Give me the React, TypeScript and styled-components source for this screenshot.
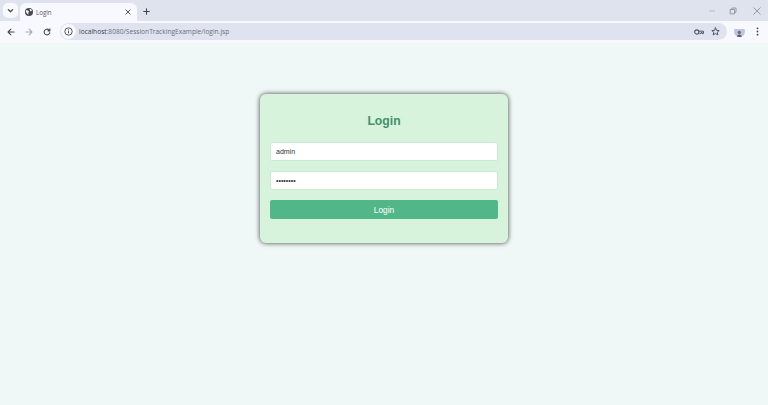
import React from "react";
import styled, { createGlobalStyle } from "styled-components";

const Global = createGlobalStyle`
  html, body { margin: 0; padding: 0; height: 100%; overflow: hidden; }
  #root { height: 100%; }
  * { box-sizing: border-box; }
`;
const Shell = styled.div`
  width: 768px; height: 405px; display: flex; flex-direction: column;
  font-family: "Liberation Sans", Arial, sans-serif; background: #eff8f6;
`;
const TabStrip = styled.div`
  height: 21px; background: #dfe3ee; display: flex; align-items: flex-end; flex: none;
`;
const TabSearch = styled.button`
  width: 15px; height: 15px; margin: 0 0 3px 3px; border: 0; padding: 0; border-radius: 5px;
  background: #f8f9fd; display: flex; align-items: center; justify-content: center;
`;
const Tab = styled.div`
  width: 117px; height: 18px; margin-left: 2px; background: #f8f9fe; border-radius: 6px 6px 0 0;
  display: flex; align-items: center; padding: 0 4px 0 4px; color: #55585e;
`;
const TabTitle = styled.span`
  margin-left: 3px; flex: 1; font-family: "Open Sans", sans-serif; font-size: 6.2px;
`;
const IconSlot = styled.span<{ $w?: number }>`
  display: flex; align-items: center; justify-content: center; flex: none; width: ${(p) => p.$w ?? 12}px;
`;
const NewTab = styled.span`
  margin: 0 0 3px 2px; width: 14px; height: 14px; display: flex; align-items: center; justify-content: center;
`;
const WindowControls = styled.div`
  margin-left: auto; align-self: flex-start; display: flex; height: 21px; align-items: center; padding-right: 6px; gap: 11px;
`;
const CloseGlyph = styled.svg`
  margin-left: 3px;
`;
const Toolbar = styled.div`
  height: 22px; background: #f8f9fe; display: flex; align-items: center; flex: none; padding: 0 0 1px 5px;
`;
const NavGroup = styled.div`
  display: flex; align-items: center; gap: 6px; width: 55px;
`;
const Omnibox = styled.div`
  width: 667px; height: 17px; border-radius: 9px; background: #dfe3f0; display: flex; align-items: center;
  padding: 0 4px 0 1px;
`;
const InfoChip = styled.span`
  width: 15px; height: 15px; border-radius: 50%; background: #f8f9fe; display: flex; align-items: center; justify-content: center; flex: none;
`;
const Url = styled.span`
  margin-left: 3px; flex: 1; font-family: "Open Sans", sans-serif; font-size: 6.6px; color: #6a6d75; white-space: nowrap;
  b { font-weight: 400; color: #3a3d42; }
`;
const OmniIcons = styled.div`
  display: flex; align-items: center; gap: 7px; padding-right: 3px;
`;
const ToolbarEnd = styled.div`
  display: flex; align-items: center; margin-left: 7px; gap: 11px;
`;
const Avatar = styled.span`
  width: 11px; height: 11px; border-radius: 50%; overflow: hidden; display: block; flex: none;
`;
const Page = styled.main`
  flex: 1; display: flex; justify-content: center; align-items: flex-start; padding-top: 51px; background: #eff8f6;
`;
const Card = styled.form`
  width: 248px; height: 149px; background: #d8f3dc; border-radius: 6px; padding: 0 10px;
  box-shadow: 0 0 5px rgba(0, 0, 0, 0.75); display: flex; flex-direction: column;
`;
const Title = styled.h2`
  margin: 19px 0 13px; height: 16px; line-height: 16px; text-align: center; font-size: 12.2px; font-weight: 700; color: #40916c;
`;
const Field = styled.input`
  width: 228px; height: 19px; margin-bottom: 10px; padding: 0 5px; border: 1px solid #c8ecd2; border-radius: 2px;
  background: #fff; font-family: "Liberation Sans", Arial, sans-serif; font-size: 7px; color: #333; outline: none;
`;
const Submit = styled.button`
  width: 228px; height: 19px; border: 0; border-radius: 2px; background: #52b788; color: #fff;
  font-family: "Liberation Sans", Arial, sans-serif; font-size: 8.4px; padding: 0;
`;

const Stroke = { fill: "none", stroke: "#44474c", strokeWidth: 1.2, strokeLinecap: "round" as const, strokeLinejoin: "round" as const };

export default function App() {
  return (
    <Shell>
      <Global />
      <TabStrip>
        <TabSearch type="button" aria-label="Tab search">
          <svg width="7" height="7" viewBox="0 0 8 8"><path d="M1.5 3l2.5 2.5L6.5 3" {...Stroke} strokeWidth={1.5} /></svg>
        </TabSearch>
        <Tab>
          <IconSlot $w={9}>
            <svg width="8" height="8" viewBox="0 0 8 8">
              <circle cx="4" cy="4" r="4" fill="#45484d" />
              <path d="M1 2.2l2 .3 1 1.2-.8 1 .3 2L2 5.5 1 4zM4.5.8l2 .6.4 1.6-1.7.2z" fill="#f8f9fe" />
            </svg>
          </IconSlot>
          <TabTitle>Login</TabTitle>
          <IconSlot $w={10}>
            <svg width="6" height="6" viewBox="0 0 7 7"><path d="M1 1l5 5M6 1L1 6" {...Stroke} strokeWidth={1.1} /></svg>
          </IconSlot>
        </Tab>
        <NewTab>
          <svg width="7" height="7" viewBox="0 0 8 8"><path d="M4 .8v6.4M.8 4h6.4" {...Stroke} strokeWidth={1.2} /></svg>
        </NewTab>
        <WindowControls>
          <svg width="10" height="10" viewBox="0 0 10 10"><path d="M2 5h6" fill="none" stroke="#b4b7c0" strokeWidth="0.9" /></svg>
          <svg width="10" height="10" viewBox="0 0 10 10"><path d="M2.2 3.5h4.3v4.3H2.2zM3.8 3.4V2h4.2v4.2H6.6" fill="none" stroke="#85888f" strokeWidth="0.8" /></svg>
          <CloseGlyph width="10" height="10" viewBox="0 0 10 10"><path d="M1.5 1.5l7 7M8.5 1.5l-7 7" fill="none" stroke="#85888f" strokeWidth="0.8" /></CloseGlyph>
        </WindowControls>
      </TabStrip>
      <Toolbar>
        <NavGroup>
          <IconSlot>
            <svg width="8" height="8" viewBox="0 0 9 9"><path d="M8 4.5H1.3M4.3 1.4L1.2 4.5l3.1 3.1" {...Stroke} /></svg>
          </IconSlot>
          <IconSlot>
            <svg width="8" height="8" viewBox="0 0 9 9"><path d="M1 4.5h6.7M4.7 1.4l3.1 3.1-3.1 3.1" {...Stroke} stroke="#a8abb3" /></svg>
          </IconSlot>
          <IconSlot>
            <svg width="8" height="8" viewBox="0 0 9 9"><path d="M7.6 5.2A3.2 3.2 0 1 1 6.7 2.2L7.8 3.2M7.8 1v2.2H5.6" {...Stroke} /></svg>
          </IconSlot>
        </NavGroup>
        <Omnibox>
          <InfoChip>
            <svg width="9" height="9" viewBox="0 0 9 9">
              <circle cx="4.5" cy="4.5" r="3.7" fill="none" stroke="#44474c" strokeWidth="0.9" />
              <path d="M4.5 4v2.4" stroke="#44474c" strokeWidth="0.9" />
              <circle cx="4.5" cy="2.8" r=".6" fill="#44474c" />
            </svg>
          </InfoChip>
          <Url><b>localhost</b>:8080/SessionTrackingExample/login.jsp</Url>
          <OmniIcons>
            <svg width="10" height="8" viewBox="0 0 10 8">
              <circle cx="2.8" cy="4" r="2.1" fill="none" stroke="#55585e" strokeWidth="1.1" />
              <path d="M5 3.2h4.4v2.4H8.3V4.6H7v1H5.6" fill="none" stroke="#55585e" strokeWidth="1" />
            </svg>
            <svg width="9" height="9" viewBox="0 0 10 10"><path d="M5 1l1.2 2.7 2.9.3-2.2 1.9.7 2.9L5 7.3 2.4 8.8l.7-2.9L.9 4l2.9-.3z" {...Stroke} strokeWidth={1} /></svg>
          </OmniIcons>
        </Omnibox>
        <ToolbarEnd>
          <Avatar>
            <svg width="11" height="11" viewBox="0 0 11 11">
              <rect width="11" height="11" fill="#bcc6e8" />
              <rect y="9" width="11" height="2" fill="#59d3bd" />
              <circle cx="5.3" cy="3.5" r="1.7" fill="#8a6a55" />
              <path d="M2.6 9.5c.2-3 1.3-4 2.7-4s2.6 1 2.8 4z" fill="#55606f" />
            </svg>
          </Avatar>
          <svg width="3" height="9" viewBox="0 0 3 10">
            <circle cx="1.5" cy="1.5" r="1" fill="#44474c" /><circle cx="1.5" cy="5" r="1" fill="#44474c" /><circle cx="1.5" cy="8.5" r="1" fill="#44474c" />
          </svg>
        </ToolbarEnd>
      </Toolbar>
      <Page>
        <Card onSubmit={(e) => e.preventDefault()}>
          <Title>Login</Title>
          <Field type="text" defaultValue="admin" />
          <Field type="password" defaultValue="password" />
          <Submit type="submit">Login</Submit>
        </Card>
      </Page>
    </Shell>
  );
}
